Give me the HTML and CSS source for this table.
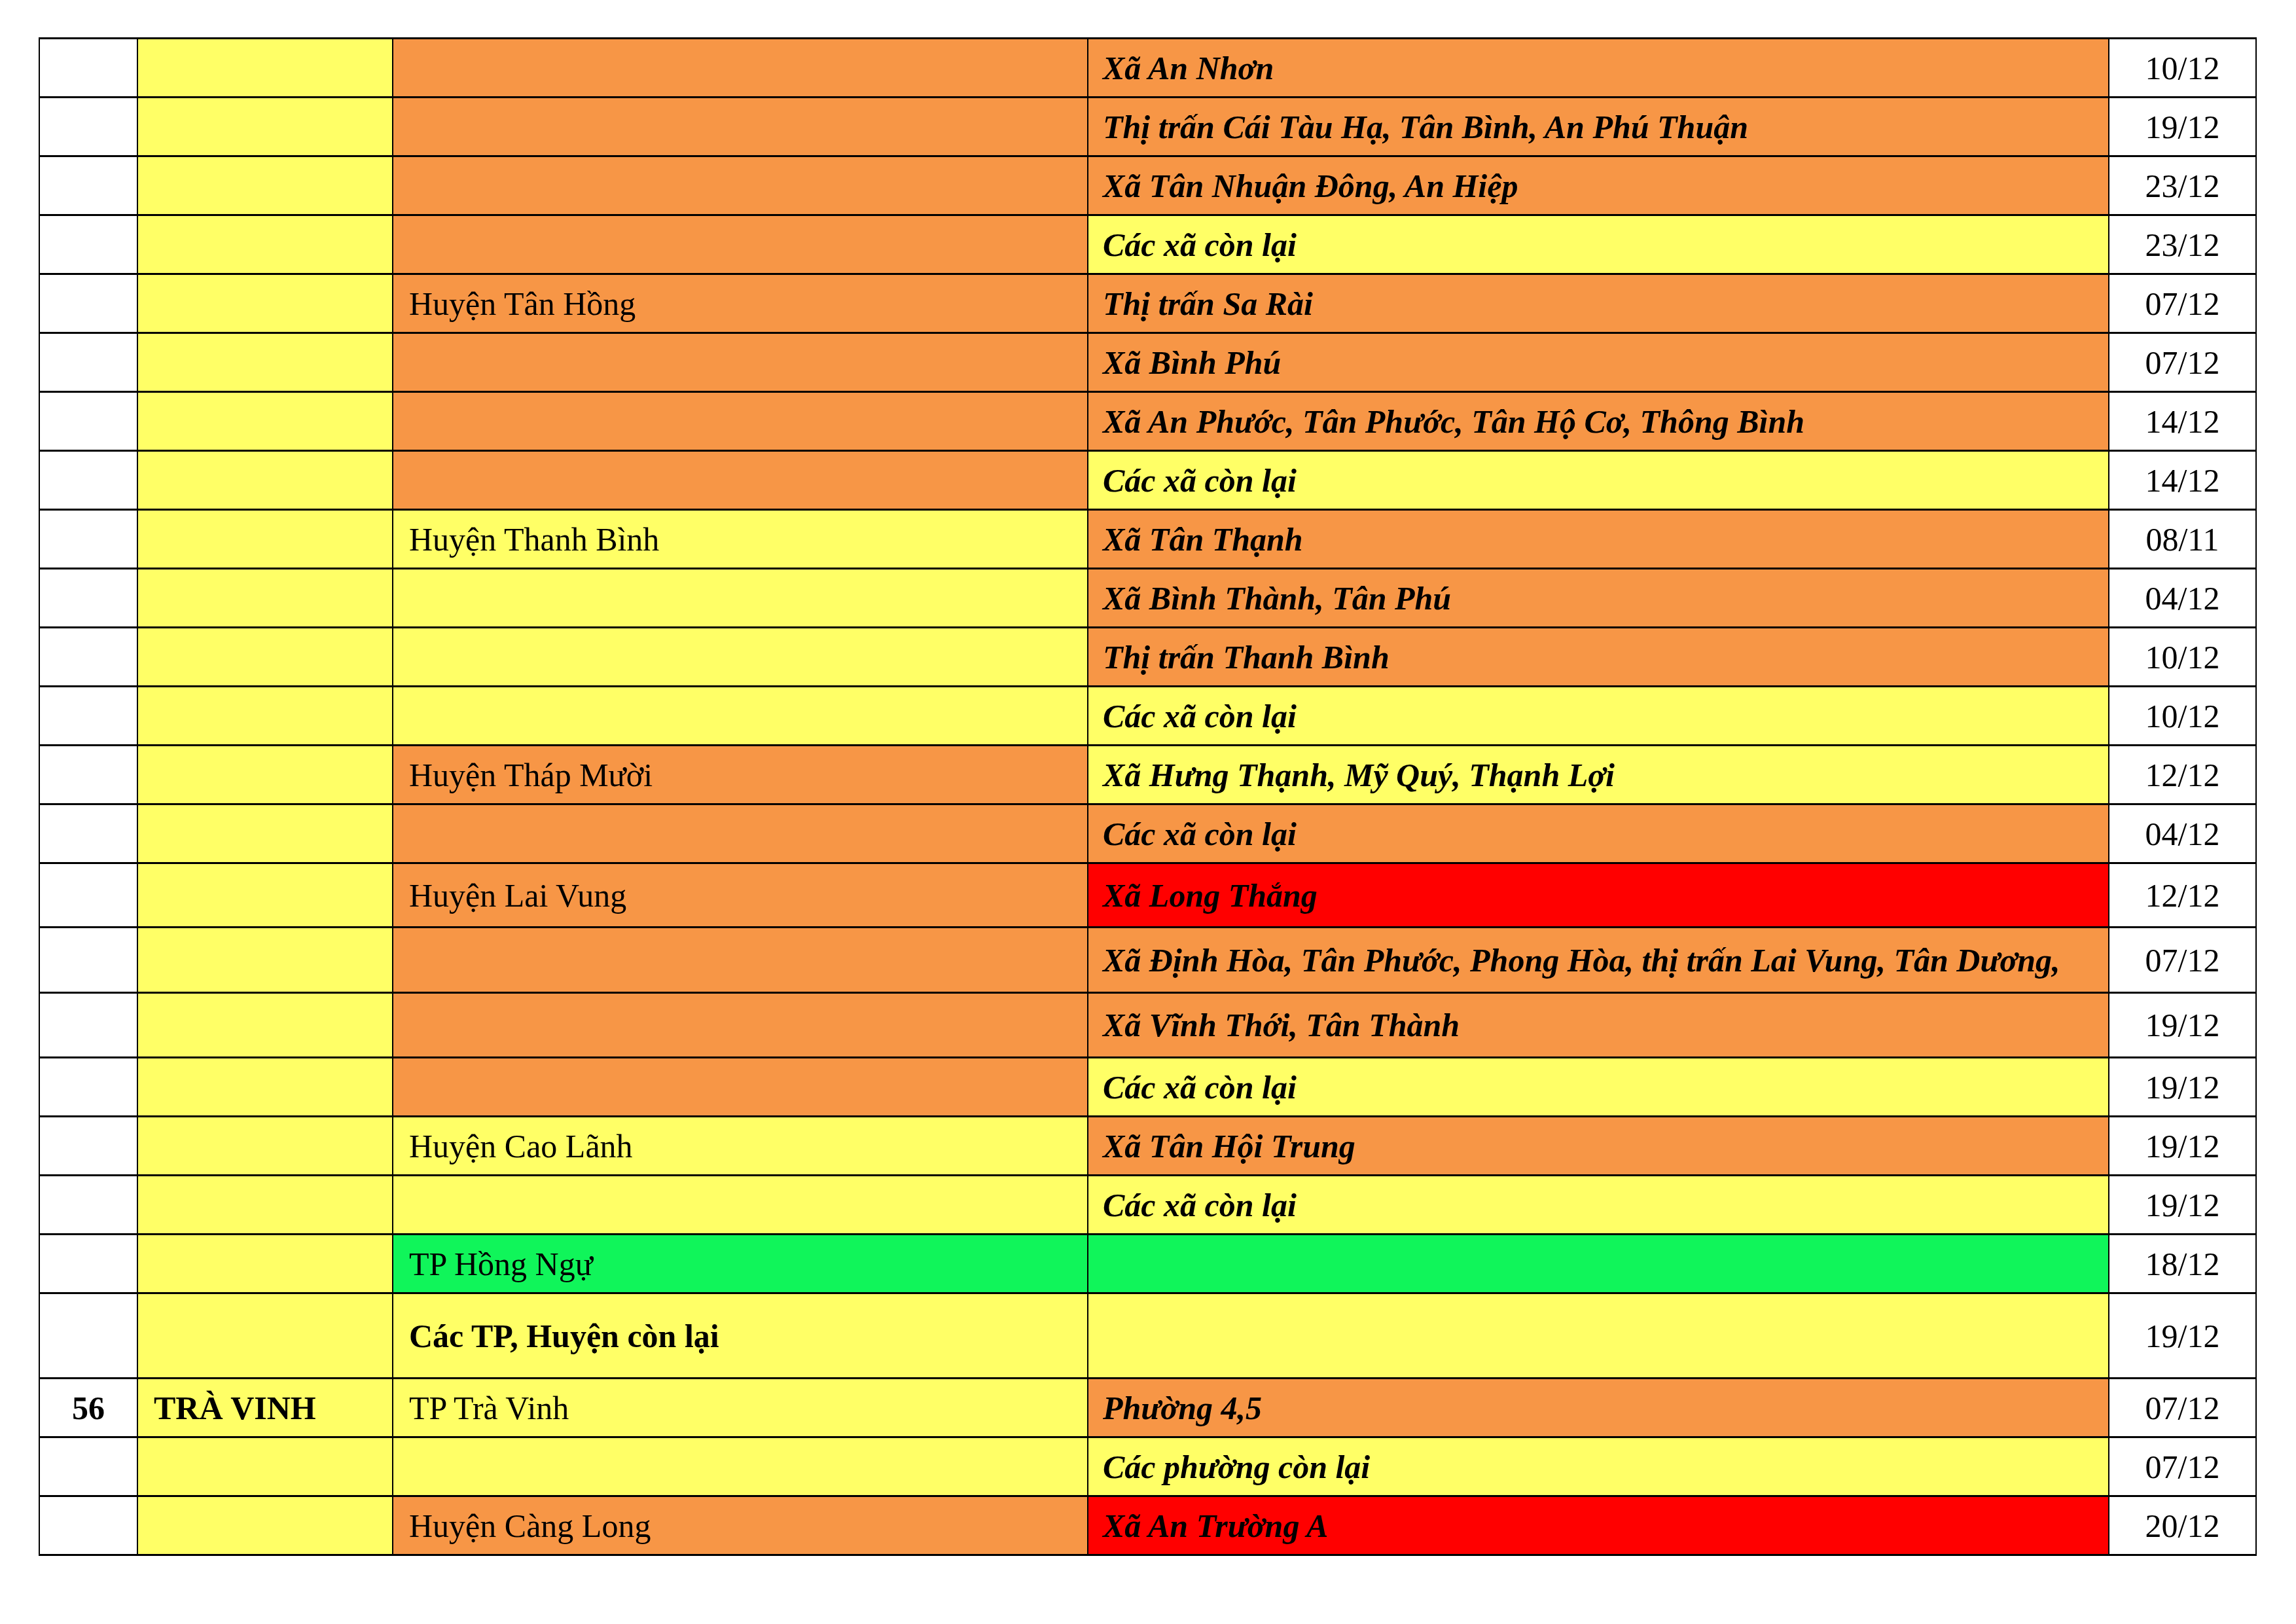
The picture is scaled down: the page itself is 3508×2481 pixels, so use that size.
FILE: index.html
```html
<!DOCTYPE html>
<html lang="vi">
<head>
<meta charset="utf-8">
<title>Bảng cấp độ dịch</title>
<link rel="stylesheet" href="styles.css">
</head>
<body>
<div class="sheet">
  <div class="row"><div class="c c1"></div><div class="c c2 y"></div><div class="c c3 o"></div><div class="c c4 o">Xã An Nhơn</div><div class="c c5">10/12</div></div>
  <div class="row"><div class="c c1"></div><div class="c c2 y"></div><div class="c c3 o"></div><div class="c c4 o">Thị trấn Cái Tàu Hạ, Tân Bình, An Phú Thuận</div><div class="c c5">19/12</div></div>
  <div class="row"><div class="c c1"></div><div class="c c2 y"></div><div class="c c3 o"></div><div class="c c4 o">Xã Tân Nhuận Đông, An Hiệp</div><div class="c c5">23/12</div></div>
  <div class="row"><div class="c c1"></div><div class="c c2 y"></div><div class="c c3 o"></div><div class="c c4 y">Các xã còn lại</div><div class="c c5">23/12</div></div>
  <div class="row"><div class="c c1"></div><div class="c c2 y"></div><div class="c c3 o">Huyện Tân Hồng</div><div class="c c4 o">Thị trấn Sa Rài</div><div class="c c5">07/12</div></div>
  <div class="row"><div class="c c1"></div><div class="c c2 y"></div><div class="c c3 o"></div><div class="c c4 o">Xã Bình Phú</div><div class="c c5">07/12</div></div>
  <div class="row"><div class="c c1"></div><div class="c c2 y"></div><div class="c c3 o"></div><div class="c c4 o">Xã An Phước, Tân Phước, Tân Hộ Cơ, Thông Bình</div><div class="c c5">14/12</div></div>
  <div class="row"><div class="c c1"></div><div class="c c2 y"></div><div class="c c3 o"></div><div class="c c4 y">Các xã còn lại</div><div class="c c5">14/12</div></div>
  <div class="row"><div class="c c1"></div><div class="c c2 y"></div><div class="c c3 y">Huyện Thanh Bình</div><div class="c c4 o">Xã Tân Thạnh</div><div class="c c5">08/11</div></div>
  <div class="row"><div class="c c1"></div><div class="c c2 y"></div><div class="c c3 y"></div><div class="c c4 o">Xã Bình Thành, Tân Phú</div><div class="c c5">04/12</div></div>
  <div class="row"><div class="c c1"></div><div class="c c2 y"></div><div class="c c3 y"></div><div class="c c4 o">Thị trấn Thanh Bình</div><div class="c c5">10/12</div></div>
  <div class="row"><div class="c c1"></div><div class="c c2 y"></div><div class="c c3 y"></div><div class="c c4 y">Các xã còn lại</div><div class="c c5">10/12</div></div>
  <div class="row"><div class="c c1"></div><div class="c c2 y"></div><div class="c c3 o">Huyện Tháp Mười</div><div class="c c4 y">Xã Hưng Thạnh, Mỹ Quý, Thạnh Lợi</div><div class="c c5">12/12</div></div>
  <div class="row"><div class="c c1"></div><div class="c c2 y"></div><div class="c c3 o"></div><div class="c c4 o">Các xã còn lại</div><div class="c c5">04/12</div></div>
  <div class="row h98"><div class="c c1"></div><div class="c c2 y"></div><div class="c c3 o">Huyện Lai Vung</div><div class="c c4 r">Xã Long Thắng</div><div class="c c5">12/12</div></div>
  <div class="row h100"><div class="c c1"></div><div class="c c2 y"></div><div class="c c3 o"></div><div class="c c4 o">Xã Định Hòa, Tân Phước, Phong Hòa, thị trấn Lai Vung, Tân Dương,</div><div class="c c5">07/12</div></div>
  <div class="row h99"><div class="c c1"></div><div class="c c2 y"></div><div class="c c3 o"></div><div class="c c4 o">Xã Vĩnh Thới, Tân Thành</div><div class="c c5">19/12</div></div>
  <div class="row"><div class="c c1"></div><div class="c c2 y"></div><div class="c c3 o"></div><div class="c c4 y">Các xã còn lại</div><div class="c c5">19/12</div></div>
  <div class="row"><div class="c c1"></div><div class="c c2 y"></div><div class="c c3 y">Huyện Cao Lãnh</div><div class="c c4 o">Xã Tân Hội Trung</div><div class="c c5">19/12</div></div>
  <div class="row"><div class="c c1"></div><div class="c c2 y"></div><div class="c c3 y"></div><div class="c c4 y">Các xã còn lại</div><div class="c c5">19/12</div></div>
  <div class="row"><div class="c c1"></div><div class="c c2 y"></div><div class="c c3 g">TP Hồng Ngự</div><div class="c c4 g"></div><div class="c c5">18/12</div></div>
  <div class="row h130"><div class="c c1"></div><div class="c c2 y"></div><div class="c c3 y bold">Các TP, Huyện còn lại</div><div class="c c4 y"></div><div class="c c5">19/12</div></div>
  <div class="row"><div class="c c1 bold">56</div><div class="c c2 y bold">TRÀ VINH</div><div class="c c3 y">TP Trà Vinh</div><div class="c c4 o">Phường 4,5</div><div class="c c5">07/12</div></div>
  <div class="row"><div class="c c1"></div><div class="c c2 y"></div><div class="c c3 y"></div><div class="c c4 y">Các phường còn lại</div><div class="c c5">07/12</div></div>
  <div class="row"><div class="c c1"></div><div class="c c2 y"></div><div class="c c3 o">Huyện Càng Long</div><div class="c c4 r">Xã An Trường A</div><div class="c c5">20/12</div></div>
</div>
</body>
</html>
```
FILE: styles.css
```css
html, body {
  margin: 0;
  padding: 0;
  background: #ffffff;
}
body {
  padding: 57px 0 0 59px;
  font-family: "Liberation Serif", "Times New Roman", serif;
  font-size: 50px;
  color: #000000;
}
.sheet {
  width: 3389px;
  box-sizing: border-box;
  border-top: 3px solid #000;
  border-left: 2px solid #000;
}
.row {
  display: grid;
  grid-template-columns: 150px 390px 1062px 1560px 225px;
  height: 90px;
  box-sizing: border-box;
  border-bottom: 3px solid #000;
}
.row.h98 { height: 98px; }
.row.h100 { height: 100px; }
.row.h99 { height: 99px; }
.row.h130 { height: 130px; }
.c {
  display: flex;
  align-items: center;
  box-sizing: border-box;
  border-right: 2px solid #000;
  padding: 0 24px;
  white-space: nowrap;
  overflow: hidden;
  background: #ffffff;
}
.c1 { justify-content: center; padding: 0; }
.c4 { font-weight: bold; font-style: italic; padding-left: 22px; }
.c5 { justify-content: center; padding: 0; }
.bold { font-weight: bold; }
.y { background: #ffff66; }
.o { background: #f79646; }
.r { background: #ff0000; }
.g { background: #10f55a; }
```
